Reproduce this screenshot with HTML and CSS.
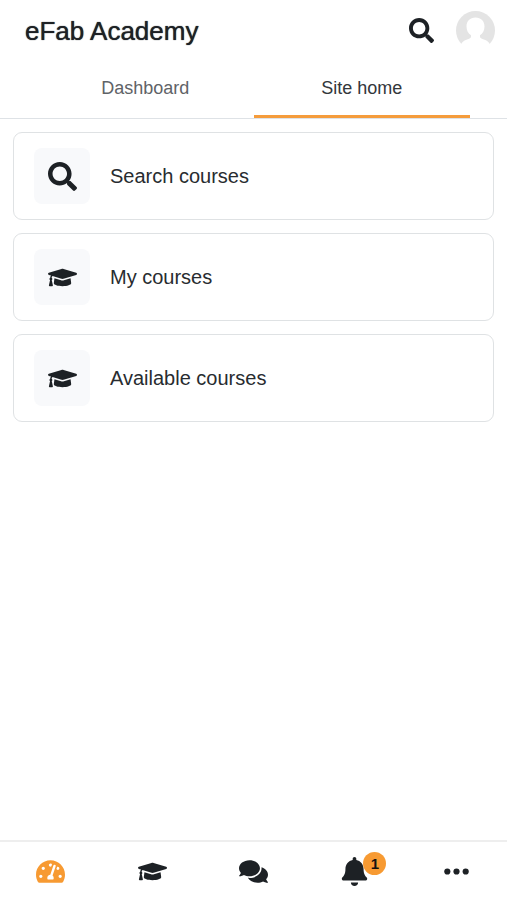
FILE: index.html
```html
<!DOCTYPE html>
<html lang="en">
<head>
<meta charset="utf-8">
<meta name="viewport" content="width=device-width, initial-scale=1">
<title>eFab Academy</title>
<link rel="stylesheet" href="styles.css">
</head>
<body>
<svg class="defs" aria-hidden="true">
  <symbol id="search" viewBox="0 0 512 512"><path d="M505 442.7L405.3 343c-4.5-4.5-10.6-7-17-7H372c27.6-35.3 44-79.7 44-128C416 93.1 322.9 0 208 0S0 93.1 0 208s93.1 208 208 208c48.3 0 92.7-16.4 128-44v16.3c0 6.4 2.5 12.5 7 17l99.7 99.7c9.4 9.4 24.6 9.4 33.9 0l28.3-28.3c9.4-9.4 9.4-24.6.1-34zM208 336c-70.7 0-128-57.2-128-128 0-70.7 57.2-128 128-128 70.7 0 128 57.2 128 128 0 70.7-57.2 128-128 128z"/></symbol>
  <symbol id="cap" viewBox="0 0 640 512"><path d="M622.34 153.2L343.4 67.5c-15.2-4.67-31.6-4.67-46.79 0L17.66 153.2c-23.54 7.23-23.54 38.36 0 45.59l48.63 14.94c-10.67 13.19-17.23 29.28-17.88 46.9C38.78 266.15 32 276.11 32 288c0 10.78 5.68 19.85 13.86 25.65L20.33 428.53C18.11 438.52 25.71 448 35.94 448h56.11c10.24 0 17.84-9.48 15.62-19.47L82.14 313.65C90.32 307.85 96 298.78 96 288c0-11.57-6.47-21.25-15.66-26.87.76-15.02 8.44-28.3 20.69-36.72L296.6 284.5c9.06 2.78 26.44 6.25 46.79 0l278.95-85.7c23.55-7.24 23.55-38.36 0-45.6zM352.79 315.09c-28.53 8.76-52.84 3.92-65.59 0l-145.02-44.55L128 384c0 35.35 85.96 64 192 64s192-28.65 192-64l-14.18-113.47-145.03 44.56z"/></symbol>
</svg>
<header class="header">
  <div class="bar">
    <h1 class="title">eFab Academy</h1>
    <button class="icon-button" type="button" aria-label="Search"><svg class="search-icon"><use href="#search"/></svg></button>
    <button class="icon-button" type="button" aria-label="User account">
      <svg class="avatar" viewBox="0 0 39 39">
        <circle cx="19.5" cy="19.5" r="19.5" fill="#e4e4e4"/>
        <path fill="#fff" d="M19.500 6.500c5.500 0 9 3.700 9 9 0 4-1.700 7-4.500 8.700v1.300c0 1.500 1 1.900 2.500 2.400 4 1.300 6.500 2.600 8 6.600L35 39H4l.5-4.500c1.500-4 4-5.300 8-6.600 1.500-.5 2.500-.9 2.500-2.400v-1.300c-2.800-1.700-4.500-4.700-4.500-8.700 0-5.300 3.500-9 9-9z"/>
      </svg>
    </button>
  </div>
  <nav class="tabs" aria-label="Home">
    <a class="tab" href="#dashboard">Dashboard</a>
    <a class="tab tab-active" href="#site-home" aria-current="page">Site home</a>
  </nav>
</header>
<main class="list">
  <a class="card" href="#search-courses"><span class="tile"><svg class="icon"><use href="#search"/></svg></span>Search courses</a>
  <a class="card" href="#my-courses"><span class="tile"><svg class="icon"><use href="#cap"/></svg></span>My courses</a>
  <a class="card" href="#available-courses"><span class="tile"><svg class="icon"><use href="#cap"/></svg></span>Available courses</a>
</main>
<nav class="bottom" aria-label="Main">
  <a class="nav-item nav-active" href="#home" aria-label="Home"><svg class="icon" viewBox="0 0 576 512"><path d="M288 32C128.940 32 0 160.940 0 320c0 52.800 14.250 102.260 39.060 144.800 5.610 9.620 16.300 15.200 27.440 15.200h443c11.140 0 21.830-5.580 27.440-15.200C561.750 422.260 576 372.800 576 320c0-159.060-128.940-288-288-288zm0 64c14.710 0 26.580 10.130 30.320 23.650-1.110 2.260-2.640 4.230-3.450 6.670l-9.220 27.670c-5.130 3.490-10.970 6.010-17.640 6.010-17.670 0-32-14.330-32-32S270.330 96 288 96zM96 384c-17.670 0-32-14.330-32-32s14.330-32 32-32 32 14.330 32 32-14.330 32-32 32zm48-160c-17.670 0-32-14.330-32-32s14.330-32 32-32 32 14.330 32 32-14.330 32-32 32zm246.770-72.410l-61.330 184C343.130 347.330 352 364.540 352 384c0 11.720-3.380 22.550-8.880 32H232.880c-5.500-9.450-8.880-20.280-8.880-32 0-33.940 26.500-61.430 59.900-63.590l61.340-184.010c4.170-12.560 17.730-19.450 30.360-15.170 12.570 4.190 19.350 17.790 15.170 30.360zm14.660 57.200l15.520-46.550c3.470-1.290 7.130-2.230 11.050-2.230 17.670 0 32 14.330 32 32s-14.330 32-32 32c-11.380-.01-20.890-6.280-26.570-15.220zM480 384c-17.670 0-32-14.330-32-32s14.330-32 32-32 32 14.330 32 32-14.330 32-32 32z"/></svg></a>
  <a class="nav-item" href="#courses" aria-label="My courses"><svg class="icon"><use href="#cap"/></svg></a>
  <a class="nav-item" href="#messages" aria-label="Messages"><svg class="icon" viewBox="0 0 576 512"><path d="M416 192c0-88.400-93.100-160-208-160S0 103.600 0 192c0 34.300 14.100 65.900 38 92-13.400 30.200-35.500 54.200-35.800 54.500-2.200 2.300-2.800 5.700-1.500 8.700S4.800 352 8 352c36.600 0 66.900-12.300 88.700-25 32.200 15.700 70.300 25 111.300 25 114.900 0 208-71.600 208-160zm122 220c23.900-26 38-57.700 38-92 0-66.900-53.500-124.200-129.300-148.100.9 6.600 1.300 13.300 1.300 20.100 0 105.900-107.700 192-240 192-10.800 0-21.300-.8-31.700-1.900C207.800 439.600 281.800 480 368 480c41 0 79.100-9.200 111.300-25 21.800 12.700 52.100 25 88.700 25 3.200 0 6.100-1.900 7.300-4.800 1.300-2.900.7-6.300-1.500-8.700-.3-.3-22.400-24.200-35.800-54.500z"/></svg></a>
  <a class="nav-item" href="#notifications" aria-label="Notifications, 1 unread"><span class="badge-anchor"><svg class="icon" viewBox="0 0 448 512"><path d="M224 512c35.320 0 63.970-28.650 63.970-64H160.030c0 35.350 28.650 64 63.970 64zm215.390-149.710c-19.320-20.760-55.470-51.990-55.470-154.290 0-77.700-54.480-139.900-127.940-155.160V32c0-17.670-14.320-32-31.980-32s-31.980 14.330-31.980 32v20.840C118.560 68.100 64.080 130.300 64.080 208c0 102.300-36.150 133.530-55.470 154.290-6 6.450-8.660 14.160-8.610 21.710.11 16.400 12.980 32 32.100 32h383.800c19.120 0 32-15.600 32.100-32 .05-7.550-2.610-15.270-8.610-21.710z"/></svg><span class="badge">1</span></span></a>
  <a class="nav-item" href="#more" aria-label="More"><svg class="icon" viewBox="0 0 30 30"><circle cx="5.500" cy="15" r="3.200"/><circle cx="15" cy="15" r="3.200"/><circle cx="24.500" cy="15" r="3.200"/></svg></a>
</nav>
</body>
</html>
```
FILE: styles.css
```css
* {
  box-sizing: border-box;
}

body {
  display: flex;
  flex-direction: column;
  min-height: 100vh;
  margin: 0;
  background: #fff;
  color: #1d2125;
  font-family: "Liberation Sans", Arial, sans-serif;
}

a {
  color: inherit;
  text-decoration: none;
}

svg {
  display: block;
  fill: currentColor;
}

.defs {
  position: absolute;
  width: 0;
  height: 0;
}

.header {
  border-bottom: 1px solid #dee2e6;
}

.bar {
  display: flex;
  align-items: center;
  gap: 22px;
  height: 60px;
  padding: 0 12px 0 25px;
}

.title {
  flex: 1;
  margin: 0;
  padding-top: 2px;
  font-size: 26px;
  font-weight: 400;
  line-height: 30px;
  text-shadow: 0 0 1px currentColor;
}

.icon-button {
  padding: 0;
  border: 0;
  background: none;
  color: inherit;
}

.search-icon {
  width: 25px;
  height: 25px;
}

.avatar {
  width: 39px;
  height: 39px;
}

.tabs {
  display: grid;
  grid-template-columns: 1fr 1fr;
  padding: 0 37px;
}

.tab {
  height: 58px;
  border-bottom: 3px solid transparent;
  color: #5f6367;
  font-size: 18px;
  line-height: 56px;
  text-align: center;
}

.tab-active {
  border-color: #f59c3c;
  color: #33373b;
}

.list {
  display: flex;
  flex: 1;
  flex-direction: column;
  gap: 13px;
  padding: 13px;
}

.card {
  display: flex;
  align-items: center;
  gap: 20px;
  height: 88px;
  padding: 0 20px;
  border: 1px solid #dfe2e4;
  border-radius: 9px;
  color: #282c30;
  font-size: 20px;
}

.tile {
  display: grid;
  place-items: center;
  width: 56px;
  height: 56px;
  border-radius: 8px;
  background: #f8f9fb;
  color: #1d2125;
}

.icon {
  width: 29px;
  height: 29px;
}

.bottom {
  display: grid;
  grid-template-columns: repeat(5, 1fr);
  height: 60px;
  border-top: 2px solid #eee;
}

.nav-item {
  display: grid;
  place-items: center;
}

.nav-active {
  color: #f79a32;
}

.badge-anchor {
  position: relative;
}

.badge {
  position: absolute;
  top: -5px;
  left: 23px;
  width: 23px;
  height: 23px;
  border-radius: 50%;
  background: #f79a32;
  color: #111;
  font-size: 15px;
  font-weight: 700;
  line-height: 23px;
  text-align: center;
}
```
